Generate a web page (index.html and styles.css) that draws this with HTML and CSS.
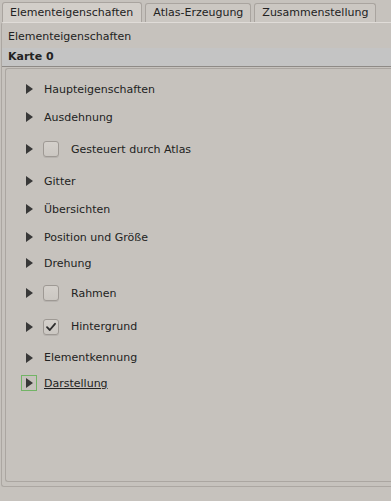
FILE: index.html
```html
<!DOCTYPE html>
<html>
<head>
<meta charset="utf-8">
<link rel="stylesheet" href="styles.css">
</head>
<body>
<div class="tabbar">
  <div class="tab active">Elementeigenschaften</div>
  <div class="tab">Atlas-Erzeugung</div>
  <div class="tab">Zusammenstellung</div>
</div>
<div class="page">
  <div class="title">Elementeigenschaften</div>
  <div class="band">Karte 0</div>
  <div class="frame">
    <div class="row"><span class="arrow"><svg width="8" height="10" viewBox="0 0 8 10"><polygon points="0,0 7,5 0,10"/></svg></span><span class="label">Haupteigenschaften</span></div>
    <div class="row"><span class="arrow"><svg width="8" height="10" viewBox="0 0 8 10"><polygon points="0,0 7,5 0,10"/></svg></span><span class="label">Ausdehnung</span></div>
    <div class="row h36"><span class="arrow"><svg width="8" height="10" viewBox="0 0 8 10"><polygon points="0,0 7,5 0,10"/></svg></span><span class="check"></span><span class="label cblabel">Gesteuert durch Atlas</span></div>
    <div class="row"><span class="arrow"><svg width="8" height="10" viewBox="0 0 8 10"><polygon points="0,0 7,5 0,10"/></svg></span><span class="label">Gitter</span></div>
    <div class="row"><span class="arrow"><svg width="8" height="10" viewBox="0 0 8 10"><polygon points="0,0 7,5 0,10"/></svg></span><span class="label">Übersichten</span></div>
    <div class="row"><span class="arrow"><svg width="8" height="10" viewBox="0 0 8 10"><polygon points="0,0 7,5 0,10"/></svg></span><span class="label">Position und Größe</span></div>
    <div class="row h24"><span class="arrow"><svg width="8" height="10" viewBox="0 0 8 10"><polygon points="0,0 7,5 0,10"/></svg></span><span class="label">Drehung</span></div>
    <div class="row h36"><span class="arrow"><svg width="8" height="10" viewBox="0 0 8 10"><polygon points="0,0 7,5 0,10"/></svg></span><span class="check"></span><span class="label cblabel">Rahmen</span></div>
    <div class="row h31"><span class="arrow"><svg width="8" height="10" viewBox="0 0 8 10"><polygon points="0,0 7,5 0,10"/></svg></span><span class="check checked"><svg width="16" height="16" viewBox="0 0 16 16"><path d="M4 8.2 L6.8 11 L12 4.8" fill="none" stroke="#2e2e2e" stroke-width="1.8" stroke-linecap="round" stroke-linejoin="round"/></svg></span><span class="label cblabel">Hintergrund</span></div>
    <div class="row h31"><span class="arrow"><svg width="8" height="10" viewBox="0 0 8 10"><polygon points="0,0 7,5 0,10"/></svg></span><span class="label">Elementkennung</span></div>
    <div class="row h20"><span class="arrow focus"><svg width="8" height="10" viewBox="0 0 8 10"><polygon points="0,0 7,5 0,10"/></svg></span><span class="label underline">Darstellung</span></div>
  </div>
</div>
</body>
</html>
```
FILE: styles.css
```css
html, body {
  margin: 0;
  padding: 0;
}
body {
  width: 391px;
  height: 501px;
  overflow: hidden;
  background: #c6c2bd;
  font-family: "DejaVu Sans", sans-serif;
  font-size: 11px;
  color: #222;
}
.tabbar {
  display: flex;
  align-items: flex-end;
  gap: 3px;
  height: 22px;
  padding-left: 2px;
  box-sizing: border-box;
}
.tab {
  height: 18px;
  line-height: 18px;
  padding: 0 7px;
  border: 1px solid #a9a49f;
  border-bottom: none;
  border-radius: 3px 3px 0 0;
  background: #cbc7c2;
  white-space: nowrap;
}
.tab.active {
  height: 19px;
  line-height: 19px;
  padding: 0 8px 0 7px;
  background: #d2cec9;
}
.page {
  margin-left: 1px;
  height: 465px;
  box-sizing: border-box;
  border: 1px solid #aca7a2;
  border-right: none;
  border-top-color: #e0dcd8;
  border-radius: 3px 0 0 3px;
  display: flex;
  flex-direction: column;
}
.title {
  height: 25px;
  line-height: 22px;
  padding-top: 3px;
  padding-left: 6px;
  box-sizing: border-box;
}
.band {
  height: 19px;
  line-height: 18px;
  padding-left: 6px;
  background: #c4c4c4;
  font-weight: bold;
  border-bottom: 1px solid #8e8a86;
  box-sizing: border-box;
}
.frame {
  flex: 1;
  margin: 1px 0 4px 3px;
  border: 1px solid #aba6a1;
  border-right: none;
  border-radius: 3px 0 0 3px;
  padding-top: 6px;
  padding-left: 15px;
  display: flex;
  flex-direction: column;
}
.row {
  height: 28px;
  display: flex;
  align-items: center;
}
.h20 { height: 20px; }
.h24 { height: 24px; }
.h31 { height: 31px; }
.h36 { height: 36px; }
.arrow {
  width: 16px;
  height: 16px;
  box-sizing: border-box;
  display: flex;
  align-items: center;
  justify-content: center;
  margin-right: 7px;
}
.arrow svg {
  fill: #383838;
  margin-left: 1px;
}
.arrow.focus {
  border: 1px solid #72b466;
}
.check {
  width: 16px;
  height: 16px;
  margin-left: -1px;
  box-sizing: border-box;
  border: 1px solid #9e9994;
  border-radius: 3px;
  background: linear-gradient(#d4d0cb, #cbc7c2);
  box-shadow: 0 1px 0 rgba(0,0,0,0.08);
  display: flex;
  align-items: center;
  justify-content: center;
}
.check svg {
  margin: -1px;
}
.label {
  white-space: nowrap;
}
.cblabel {
  margin-left: 12px;
}
.underline {
  text-decoration: underline;
}
```
